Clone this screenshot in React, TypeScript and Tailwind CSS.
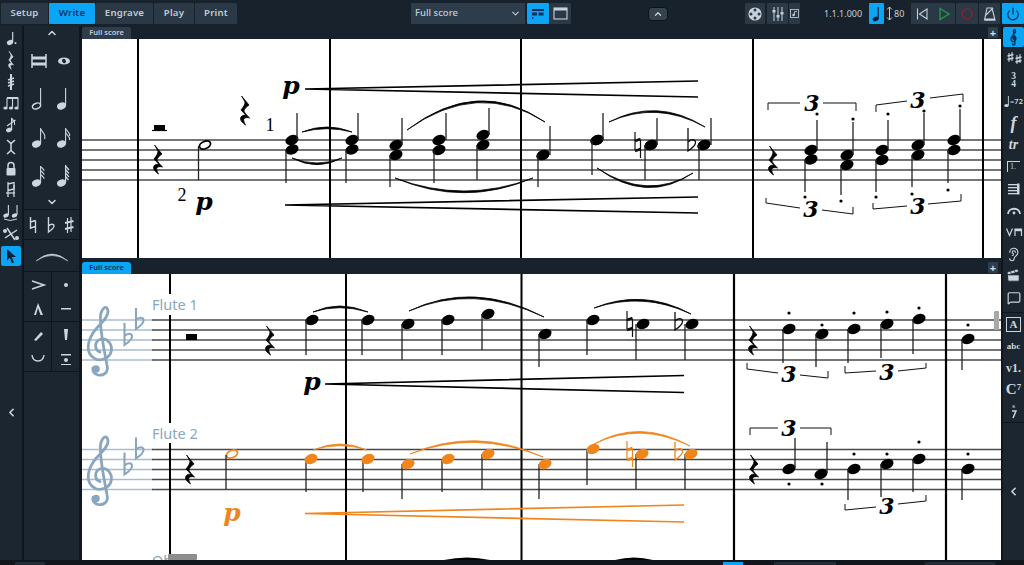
import React from "react";
import { ChevronUp, ChevronDown, ChevronLeft, Power, Ear, Clapperboard, MessageSquare } from "lucide-react";

const ORANGE = "#f0851c";
const BLUE = "#8aa6bf";
const STAFF = "#484848";
const REST = "M-3 -14 L3.5 -5 C1 -3 -0.5 -1 -1 1 C0 3 2 6 4 8 C1 7 -2 8 -1 11 C-0.5 13 0 14 0.5 15 C-2 13 -5 10 -3.5 7 C-2.5 5 0 5 1 5.5 L-3.5 0 C-1.5 -3 0 -5 0 -8 C-1 -10 -2 -12 -3 -14 Z";
const engr = "font-['DejaVu_Serif',serif] font-bold italic";

type XY = [number, number];
const Head = ({ x, y, c = "#000" }: { x: number; y: number; c?: string }) => (
  <ellipse cx={x} cy={y} rx={6.8} ry={4.9} fill={c} transform={`rotate(-24 ${x} ${y})`} />
);
const Open = ({ x, y, c }: { x: number; y: number; c: string }) => (
  <ellipse cx={x} cy={y} rx={5.8} ry={3.6} fill="none" stroke={c} strokeWidth={1.8} transform={`rotate(-24 ${x} ${y})`} />
);
const Stem = ({ x, a, b }: { x: number; a: number; b: number }) => <line x1={x} x2={x} y1={a} y2={b} stroke="#222" strokeWidth={1.3} />;
const Dot = ({ x, y }: { x: number; y: number }) => <circle cx={x} cy={y} r={1.6} fill="#000" />;
const Rest = ({ x, y }: { x: number; y: number }) => <path d={REST} fill="#000" stroke="#000" strokeWidth={0.7} transform={`translate(${x} ${y}) scale(1.15 1)`} />;
const Slur = ({ p, c = "#000", t = 3.4 }: { p: number[]; c?: string; t?: number }) => (
  <path d={`M${p[0]} ${p[1]} Q${p[2]} ${p[3]} ${p[4]} ${p[5]} Q${p[2]} ${p[3] + t} ${p[0]} ${p[1]} Z`} fill={c} stroke={c} strokeWidth={0.8} />
);
const Hairpin = ({ x1, y, x2, d, c = "#000" }: { x1: number; y: number; x2: number; d: number; c?: string }) => (
  <polyline points={`${x2},${y - d} ${x1},${y} ${x2},${y + d}`} fill="none" stroke={c} strokeWidth={1.7} />
);
const Dyn = ({ x, y, c = "#000" }: { x: number; y: number; c?: string }) => (
  <text x={x} y={y} fontSize={25} fill={c} textAnchor="middle" className={engr}>p</text>
);
const Tuplet = ({ a, b, n }: { a: XY[]; b: XY[]; n: XY }) => (
  <g>
    <polyline points={a.map((q) => q.join(",")).join(" ")} fill="none" stroke="#111" strokeWidth={1} />
    <polyline points={b.map((q) => q.join(",")).join(" ")} fill="none" stroke="#111" strokeWidth={1} />
    <text x={n[0]} y={n[1] + 8} fontSize={22} textAnchor="middle" className={engr}>3</text>
  </g>
);
const Flat = ({ x, a, b, c = "#111", w = 1.3 }: { x: number; a: number; b: number; c?: string; w?: number }) => (
  <path d={`M${x} ${a} L${x} ${b} C${x + 3} ${b - 2} ${x + 8} ${b - 6} ${x + 7.5} ${b - 9} C${x + 7} ${b - 12} ${x + 3} ${b - 12} ${x} ${b - 9}`} fill="none" stroke={c} strokeWidth={w} />
);
const Natural = ({ x, y, c = "#111" }: { x: number; y: number; c?: string }) => (
  <g stroke={c} fill="none">
    <path d={`M${x - 3} ${y - 13} V${y + 5} M${x + 2.5} ${y - 5} V${y + 13}`} strokeWidth={1.2} />
    <path d={`M${x - 3} ${y - 4} L${x + 2.5} ${y - 6} M${x - 3} ${y + 6} L${x + 2.5} ${y + 4}`} strokeWidth={2.4} />
  </g>
);
const Clef = ({ dy }: { dy: number }) => (
  <g transform={`translate(0 ${dy})`} stroke={BLUE} fill="none" strokeLinecap="round">
    <path strokeWidth={2.8} d="M100 352 C94 350 94 341 101 339 C108 338 113 345 111 352 C109 359 99 362 94 358 C87 354 86 344 93 333 C98 325 109 318 108 311 C107 305 103 307 101 313 C99 320 103 345 107 365 C109 373 103 376 98 375 C94 374 92 371 93 368" />
    <circle cx={96} cy={369} r={3.8} fill={BLUE} stroke="none" />
  </g>
);
const Staff = ({ ys, from = 82, to = 1001 }: { ys: number[]; from?: number; to?: number }) => (
  <g>{ys.map((y) => <line key={y} x1={from} x2={to} y1={y} y2={y} stroke={STAFF} strokeWidth={1.4} />)}</g>
);
const Bar = ({ x, a, b, w = 2 }: { x: number; a: number; b: number; w?: number }) => <line x1={x} x2={x} y1={a} y2={b} stroke="#000" strokeWidth={w} />;

const Chord = ({ x, y1, y2, ux, top, lx, bot }: { x: number; y1: number; y2: number; ux: number; top: number; lx: number; bot: number }) => (
  <g>
    <Head x={x} y={y1} /><Head x={x} y={y2} />
    <Stem x={ux} a={top} b={y1} /><Stem x={lx} a={y2} b={bot} />
  </g>
);

function TopScore() {
  const chords = [
    [292, 140, 149.5, 297, 113, 286, 183], [352, 140, 149.5, 358, 113, 346, 183], [396, 145, 155, 402, 118, 390, 187],
    [439, 140, 150, 446, 113, 434, 183], [483, 135, 145, 489, 108, 477, 180], [597, 140, 140, 603, 113, 592, 175],
    [543, 155, 155, 550, 126, 538, 187], [651, 145, 145, 657, 118, 645, 180], [704, 145, 145, 711, 118, 699, 180],
    [811, 150, 159.5, 817, 120, 805, 192], [847, 155, 165, 853, 122, 841, 195], [882, 150, 160, 888, 120, 876, 192],
    [918, 145, 155, 924, 113, 912, 187], [954, 140, 150, 960, 109, 948, 183],
  ];
  const dots: XY[] = [[817, 114], [805, 197], [853, 119], [841, 201], [888, 114], [876, 197], [924, 111], [912, 194], [960, 106], [948, 190]];
  return (
    <svg width={919} height={219} viewBox="82 39 919 219" className="block">
      <Staff ys={[140, 150, 160, 170, 180]} />
      {[138, 330, 521, 753, 983].map((x) => <Bar key={x} x={x} a={39} b={258} />)}
      <rect x={154} y={125} width={11} height={5} fill="#000" />
      <line x1={152} x2={167} y1={130.5} y2={130.5} stroke="#000" strokeWidth={1.2} />
      <Rest x={158} y={159} /><Rest x={245} y={110} /><Rest x={773} y={160} />
      <Open x={205} y={145} c="#000" /><Stem x={198.5} a={146} b={180} />
      <text x={270} y={131} fontSize={18} textAnchor="middle" fill="#000" fontFamily="Liberation Serif, serif">1</text>
      <text x={182} y={201} fontSize={18} textAnchor="middle" fill="#000" fontFamily="Liberation Serif, serif">2</text>
      <Dyn x={291} y={94} /><Dyn x={204} y={210} />
      {chords.map((c) => <Chord key={c[0]} x={c[0]} y1={c[1]} y2={c[2]} ux={c[3]} top={c[4]} lx={c[5]} bot={c[6]} />)}
      <Natural x={638} y={145} /><Flat x={688} a={128} b={151} />
      {dots.map((d) => <Dot key={d.join()} x={d[0]} y={d[1]} />)}
      <Hairpin x1={305} y={89} x2={698} d={8} /><Hairpin x1={285} y={205} x2={698} d={8} />
      <Slur p={[302, 132, 327, 122, 352, 132]} /><Slur p={[292, 158, 317, 168, 342, 158]} />
      <Slur p={[407, 130, 478, 76, 545, 122]} /><Slur p={[395, 178, 464, 204, 533, 178]} />
      <Slur p={[609, 122, 657, 97, 705, 127]} /><Slur p={[597, 168, 647, 201, 693, 173]} />
      <Tuplet a={[[768, 110], [768, 103], [800, 103]]} b={[[823, 103], [856, 103], [856, 111]]} n={[812, 103]} />
      <Tuplet a={[[876, 112], [876, 105], [907, 101]]} b={[[930, 98], [963, 94], [963, 102]]} n={[918, 100]} />
      <Tuplet a={[[766, 198], [766, 203], [800, 208]]} b={[[822, 210], [853, 214], [853, 207]]} n={[811, 209]} />
      <Tuplet a={[[873, 203], [873, 209], [907, 206]]} b={[[928, 204], [961, 201], [961, 194]]} n={[918, 206]} />
    </svg>
  );
}

function BottomScore() {
  const f1: number[][] = [[312, 320, 306, 355], [368, 320, 362, 355], [408, 324, 402, 360], [448, 320, 442, 355], [488, 314, 482, 350], [545, 334, 539, 367], [593, 320, 587, 355], [643, 324, 636, 360], [692, 324, 685, 360], [789, 329, 783, 363], [822, 334, 816, 367], [854, 329, 848, 363], [887, 324, 881, 358], [919, 319, 913, 354], [968, 339, 962, 370]];
  const f2: number[][] = [[311, 459, 306, 492], [368, 459, 363, 492], [408, 464, 402, 499], [448, 459, 442, 492], [488, 454, 482, 489], [545, 464, 539, 499], [593, 449, 587, 485], [642, 454, 636, 489], [691, 454, 685, 489]];
  const f2b: number[][] = [[854, 469, 848, 500], [887, 464, 881, 497], [919, 459, 913, 492], [968, 469, 962, 500]];
  const dots: XY[] = [[789, 313], [822, 325], [854, 313], [887, 312], [919, 308], [968, 325], [789, 484], [822, 484], [854, 454], [887, 454], [919, 442], [968, 454]];
  return (
    <svg width={919} height={286} viewBox="82 274 919 286" className="block">
      {[320, 330, 340, 350, 360, 449.5, 459.5, 469.5, 479.5, 489.5].map((y) => (
        <g key={y}>
          <line x1={82} x2={153} y1={y} y2={y} stroke="#a9bccc" strokeWidth={1.4} />
          <line x1={152} x2={1001} y1={y} y2={y} stroke={STAFF} strokeWidth={1.4} />
        </g>
      ))}
      <Clef dy={0} /><Clef dy={129.5} />
      <Flat x={136} a={308} b={329} c={BLUE} w={2.1} /><Flat x={124.5} a={323} b={345} c={BLUE} w={2.1} />
      <Flat x={136} a={437.5} b={458.5} c={BLUE} w={2.1} /><Flat x={124.5} a={452.5} b={474.5} c={BLUE} w={2.1} />
      <text x={152} y={310} fontSize={14.5} fill={BLUE} fontFamily="Noto Sans, sans-serif">Flute 1</text>
      <text x={152} y={439} fontSize={14.5} fill={BLUE} fontFamily="Noto Sans, sans-serif">Flute 2</text>
      <Bar x={170} a={274} b={294} /><Bar x={170} a={315} b={423} /><Bar x={170} a={443} b={556} />
      {[346, 521.5, 734, 946].map((x) => <Bar key={x} x={x} a={274} b={560} w={x > 700 ? 2.2 : 2} />)}
      <rect x={186} y={334} width={11} height={6} fill="#000" />
      <Rest x={270} y={340} /><Rest x={753} y={340} /><Rest x={190} y={469} /><Rest x={754} y={469} />
      {f1.map((n) => <g key={n[0]}><Head x={n[0]} y={n[1]} /><Stem x={n[2]} a={n[1]} b={n[3]} /></g>)}
      {f2.map((n) => <g key={n[0]}><Stem x={n[2]} a={n[1]} b={n[3]} /><Head x={n[0]} y={n[1]} c={ORANGE} /></g>)}
      {f2b.map((n) => <g key={n[0]}><Head x={n[0]} y={n[1]} /><Stem x={n[2]} a={n[1]} b={n[3]} /></g>)}
      <Head x={789} y={469} /><Stem x={795} a={438} b={468} /><Head x={821} y={474} /><Stem x={827} a={442} b={473} />
      <Open x={232} y={454} c={ORANGE} /><Stem x={226} a={455} b={489} />
      <Natural x={630} y={324} /><Flat x={675} a={312} b={330} />
      <Natural x={630} y={454} c={ORANGE} /><Flat x={675} a={442} b={460} c={ORANGE} />
      {dots.map((d) => <Dot key={d.join()} x={d[0]} y={d[1]} />)}
      <Slur p={[313, 312, 339, 300, 368, 312]} /><Slur p={[409, 311, 473, 280, 544, 317]} /><Slur p={[594, 308, 643, 288, 691, 314]} />
      <Slur p={[313, 450, 340, 438, 367, 450]} c={ORANGE} /><Slur p={[410, 454, 475, 426, 543, 457]} c={ORANGE} /><Slur p={[594, 444, 640, 418, 690, 446]} c={ORANGE} />
      <Dyn x={312} y={390} /><Dyn x={232} y={521} c={ORANGE} />
      <Hairpin x1={325} y={384} x2={684} d={8.5} /><Hairpin x1={305} y={513.5} x2={684} d={8.5} c={ORANGE} />
      <Tuplet a={[[747, 363], [747, 369], [778, 373]]} b={[[800, 375], [828, 378], [828, 371]]} n={[789, 374]} />
      <Tuplet a={[[845, 366], [845, 373], [876, 371]]} b={[[898, 371], [926, 368], [926, 363]]} n={[887, 372]} />
      <Tuplet a={[[750, 435], [750, 428], [778, 428]]} b={[[800, 428], [831, 428], [831, 435]]} n={[789, 428]} />
      <Tuplet a={[[845, 504], [845, 510], [876, 507]]} b={[[898, 504], [926, 501], [926, 495]]} n={[887, 506]} />
      <rect x={994} y={311} width={5} height={19} rx={1} fill="#a8a8a8" />
      <text x={152} y={566} fontSize={14.5} fill={BLUE} fontFamily="Noto Sans, sans-serif">Ob</text>
      <rect x={168} y={554} width={29} height={6} rx={1} fill="#8e8e8e" />
      <path d="M444 560 Q467 555 490 560 Z M615 560 Q634 555 653 560 Z" fill="#000" />
    </svg>
  );
}

const Ic = ({ w = 22, h = 22, children, vb }: { w?: number; h?: number; vb?: string; children: React.ReactNode }) => (
  <svg width={w} height={h} viewBox={vb ?? `0 0 ${w} ${h}`} fill="currentColor" stroke="none">{children}</svg>
);
const H = ({ x, y, o }: { x: number; y: number; o?: boolean }) => (
  <ellipse cx={x} cy={y} rx={o ? 4.2 : 4.6} ry={o ? 2.7 : 3.4} transform={`rotate(-22 ${x} ${y})`} fill={o ? "none" : "currentColor"} stroke={o ? "currentColor" : "none"} strokeWidth={1.4} />
);
const L = ({ d, w = 1.1 }: { d: string; w?: number }) => <path d={d} fill="none" stroke="currentColor" strokeWidth={w} />;

const leftIcons: React.ReactNode[] = [
  <Ic key="a"><ellipse cx={10} cy={15.5} rx={3.2} ry={2.4} transform="rotate(-22 10 15.5)" /><L d="M12.7 15V5" w={1.2} /><circle cx={15.5} cy={16} r={1} /></Ic>,
  <Ic key="b"><path d={REST} stroke="currentColor" strokeWidth={1} transform="translate(11 11) scale(.62)" /></Ic>,
  <Ic key="c"><L d="M11 3V19" w={2} /><L d="M8 9L14 7M8 12L14 10M8 15L14 13" w={1.6} /></Ic>,
  <Ic key="d"><L d="M7 6H18V15M12.5 6V15M7 6V15" w={1.1} /><L d="M7 6H18" w={2} /><ellipse cx={5.5} cy={16} rx={2.2} ry={1.6} /><ellipse cx={11} cy={16} rx={2.2} ry={1.6} /><ellipse cx={16.5} cy={16} rx={2.2} ry={1.6} /></Ic>,
  <Ic key="e"><ellipse cx={9} cy={16} rx={3} ry={2.2} transform="rotate(-22 9 16)" /><L d="M11.6 16V4C12.5 7 16 7 14.5 11" w={1.2} /><L d="M7 12L15.5 6" w={1.2} /></Ic>,
  <Ic key="f"><L d="M7 4C9 6 10 6 11 8C12 6 13 6 15 4M11 8V14M7 18C9 16 10 16 11 14C12 16 13 16 15 18" w={1.5} /></Ic>,
  <Ic key="g"><L d="M8 10V7.5C8 3.5 14 3.5 14 7.5V10" w={1.5} /><rect x={6.5} y={10} width={9} height={7.5} rx={1} /></Ic>,
  <Ic key="h"><L d="M8 3V18M8 5L14 3.5V10L8 11.5" w={1.3} /><L d="M14 6V18" w={1.3} /><L d="M6 14H15" w={1.3} /></Ic>,
  <Ic key="i"><ellipse cx={6} cy={14.5} rx={2.8} ry={2} transform="rotate(-22 6 14.5)" /><ellipse cx={14.5} cy={14.5} rx={2.8} ry={2} transform="rotate(-22 14.5 14.5)" /><L d="M8.4 14V4M17 14V4" w={1.1} /><L d="M4 18Q10 21 17 18" w={1} /></Ic>,
  <Ic key="j"><L d="M5 15L17 7M7 5L15 17" w={1.5} /><circle cx={5} cy={8} r={2} /><circle cx={17} cy={15} r={2} /></Ic>,
];

const Arts: React.ReactNode[] = [
  <Ic key="1" w={26} h={24}><L d="M7 8L19 12L7 16" w={1.6} /></Ic>,
  <Ic key="2" w={26} h={24}><circle cx={13} cy={12} r={2} /></Ic>,
  <Ic key="3" w={26} h={24}><path d="M13 6L18 18H15.5L13 11L11 18H9Z" /></Ic>,
  <Ic key="4" w={26} h={24}><rect x={8} y={11} width={10} height={1.5} /></Ic>,
  <Ic key="5" w={26} h={24}><path d="M9 17L16 9L18 11L11 18Z" /></Ic>,
  <Ic key="6" w={26} h={24}><path d="M11 6H15L14 17H12Z" /></Ic>,
  <Ic key="7" w={26} h={24}><L d="M7 8C8 16 18 16 19 8" w={1.4} /></Ic>,
  <Ic key="8" w={26} h={24}><rect x={8} y={7} width={10} height={1.5} /><circle cx={13} cy={13} r={2} /><rect x={8} y={17} width={10} height={1} /></Ic>,
];

const Cell = ({ children }: { children: React.ReactNode }) => <div className="flex h-[38px] items-center justify-center">{children}</div>;

function LeftPanels() {
  return (
    <>
      <div className="flex h-full w-[22px] flex-col bg-[#1c2630] pt-[1px] text-[#cdd6de]">
        {leftIcons.map((ic, i) => <div key={i} className="flex h-[21.8px] items-center justify-center">{ic}</div>)}
        <div className="mx-[1px] mt-[1px] flex h-[20px] items-center justify-center rounded-[2px] bg-[#0ba5f5] text-[#06203a]">
          <Ic w={16} h={18}><path d="M4 2L13 10H8.8L11 15.5L9 16.3L6.8 10.8L4 13.5Z" /></Ic>
        </div>
        <div className="flex flex-1 items-center justify-center"><ChevronLeft size={13} strokeWidth={3} /></div>
      </div>
      <div className="ml-[2px] flex h-full w-[55px] flex-col gap-[1px] text-[#cdd6de]">
        <div className="flex h-[183px] flex-col bg-[#1c2630]">
          <div className="flex h-[14px] items-center justify-center"><ChevronUp size={12} strokeWidth={3} /></div>
          <div className="mt-[2px] grid grid-cols-[25px_25px] pl-[2px]">
            <Cell><Ic w={24} h={24}><L d="M5 5V19M19 5V19" w={1.5} /><rect x={5} y={7.5} width={14} height={3} /><rect x={5} y={13.5} width={14} height={3} /></Ic></Cell>
            <Cell><Ic w={24} h={24}><ellipse cx={12} cy={12} rx={6} ry={3.6} /><ellipse cx={12} cy={12} rx={1.8} ry={2.4} fill="#1c2630" transform="rotate(-30 12 12)" /></Ic></Cell>
            <Cell><Ic w={24} h={28}><H x={9.5} y={21} o /><L d="M13.6 20.5V3" /></Ic></Cell>
            <Cell><Ic w={24} h={28}><H x={9.5} y={21} /><L d="M13.6 20.5V3" /></Ic></Cell>
            <Cell><Ic w={24} h={28}><H x={9.5} y={21} /><L d="M13.6 20.5V5C14 9 19.5 10 17.5 16" /></Ic></Cell>
            <Cell><Ic w={24} h={28}><H x={9.5} y={21} /><L d="M13.6 20.5V5C14 8 18.5 9 17.5 13M13.6 9C14 12 18.5 13 17.5 17" /></Ic></Cell>
            <Cell><Ic w={24} h={28}><H x={9.5} y={22} /><L d="M13.6 21.5V5C14 7 17.5 8 17 10M13.6 9C14 11 17.5 12 17 14M13.6 13C14 15 17.5 16 17 18" /></Ic></Cell>
            <Cell><Ic w={24} h={28}><H x={9.5} y={22} /><L d="M13.6 21.5V4M13.6 5L17 9M13.6 8.5L17 12.5M13.6 12L17 16M13.6 15.5L16.5 19" w={1.2} /></Ic></Cell>
          </div>
          <div className="mt-auto flex h-[15px] items-center justify-center"><ChevronDown size={12} strokeWidth={3} /></div>
        </div>
        <div className="flex h-[29px] bg-[#1c2630]">
          <div className="flex w-[18px] items-center justify-center"><Ic w={14} h={20}><L d="M4.5 2V14M4.5 7L9.5 5.5M4.5 13L9.5 11.5M9.5 5.5V18" w={1.4} /></Ic></div>
          <div className="flex w-[18px] items-center justify-center"><Ic w={14} h={20}><L d="M4.5 2V17C7 15 10.5 13 10 10.5C9.5 8.5 6 9 4.5 11" w={1.4} /></Ic></div>
          <div className="flex w-[18px] items-center justify-center"><Ic w={14} h={20}><L d="M5.5 3V18M9 2V17" w={1.2} /><L d="M3 8L11.5 6M3 14L11.5 12" w={1.9} /></Ic></div>
        </div>
        <div className="flex h-[31px] items-center justify-center bg-[#1c2630]">
          <Ic w={36} h={14}><path d="M2 12Q18 -2 34 12Q18 1 2 12Z" stroke="currentColor" strokeWidth={0.5} /></Ic>
        </div>
        <div className="grid h-[99px] grid-cols-[27px_27px] gap-[1px]">
          {[[0, 2], [1, 3], [4, 6], [5, 7]].map((p) => (
            <div key={p[0]} className="flex flex-col items-center justify-center bg-[#1c2630]">
              {Arts[p[0]]}
              {Arts[p[1]]}
            </div>
          ))}
        </div>
        <div className="flex-1 bg-[#1c2630]" />
      </div>
    </>
  );
}

function TabBar({ active }: { active?: boolean }) {
  return (
    <div className={`flex items-end bg-[#18222c] ${active ? "h-[16px]" : "h-[13px]"}`}>
      <div className={`flex h-[12px] w-[49px] items-center justify-center rounded-t-[3px] text-[7.5px] font-semibold ${active ? "bg-[#0ba5f5] text-[#06305a]" : "bg-[#2f3d4b] text-[#c3ccd4]"}`}>Full score</div>
      <div className="mr-[3px] mb-[1px] ml-auto flex h-[11px] w-[10px] items-center justify-center rounded-[1px] bg-[#2f3d4b] text-[11px] leading-none font-bold text-[#d5dce2]">+</div>
    </div>
  );
}

const Btn = ({ w, on, children, cls = "" }: { w: number; on?: boolean; children?: React.ReactNode; cls?: string }) => (
  <div style={{ width: w }} className={`flex h-[21px] items-center justify-center rounded-[1px] ${on ? "bg-[#0ba5f5]" : "bg-[#2b3946]"} ${cls}`}>{children}</div>
);
const Mode = ({ w, on, label }: { w: number; on?: boolean; label: string }) => (
  <Btn w={w} on={on}><span className={`text-[9.6px] font-semibold tracking-[0.2px] ${on ? "text-[#07346b]" : "text-[#c3ccd4]"}`}>{label}</span></Btn>
);

function TopBar() {
  return (
    <div className="flex h-[26px] items-start bg-[#18222c] pt-[3px] text-[#c8d1d9]">
      <div className="ml-[1px] flex gap-[1px]">
        <Mode w={47} label="Setup" /><Mode w={46} on label="Write" /><Mode w={57} label="Engrave" /><Mode w={40} label="Play" /><Mode w={42} label="Print" />
      </div>
      <div className="ml-[174px] flex h-[21px] w-[114px] items-center justify-between bg-[#2e3d4b] pr-[4px] pl-[4px] text-[9.5px] font-medium text-[#c3ccd4]">
        <span>Full score</span><ChevronDown size={11} strokeWidth={2.5} />
      </div>
      <Btn w={22} on cls="ml-[2px] text-[#06305a]"><Ic w={14} h={12}><rect x={1} y={1} width={12} height={2} /><rect x={1} y={4.5} width={5} height={3} /><rect x={7.5} y={4.5} width={5} height={3} /><rect x={1} y={9} width={1.4} height={2} /></Ic></Btn>
      <Btn w={21} cls="ml-[1px]"><Ic w={15} h={13}><rect x={1} y={1} width={13} height={11} fill="none" stroke="currentColor" strokeWidth={1.1} /><rect x={1} y={1} width={13} height={2.5} /></Ic></Btn>
      <div className="mt-[4px] ml-[77px] flex h-[14px] w-[20px] items-center justify-center rounded-[4px] border border-[#0e1318] bg-[#34434f]"><ChevronUp size={10} strokeWidth={3} /></div>
      <Btn w={20} cls="ml-[77px]"><Ic w={16} h={16}><circle cx={8} cy={8} r={6.6} /><g fill="#2b3946"><circle cx={8} cy={4} r={1.5} /><circle cx={8} cy={12} r={1.5} /><circle cx={4} cy={8} r={1.5} /><circle cx={12} cy={8} r={1.5} /></g></Ic></Btn>
      <Btn w={21} cls="ml-[2px]"><Ic w={14} h={16}><L d="M3 1V15M7 1V15M11 1V15" w={1} /><rect x={1.5} y={4} width={3} height={2.5} /><rect x={5.5} y={9} width={3} height={2.5} /><rect x={9.5} y={6} width={3} height={2.5} /></Ic></Btn>
      <Btn w={11} cls="ml-[1px]"><Ic w={9} h={9}><rect x={0.5} y={0.5} width={8} height={8} fill="none" stroke="currentColor" strokeWidth={0.8} /><circle cx={3.5} cy={6} r={1.2} /><L d="M4.5 6V2.5H7" w={0.8} /></Ic></Btn>
      <span className="mt-[4px] ml-[24px] w-[36px] text-center text-[9px] leading-[13px] whitespace-nowrap">1.1.1.000</span>
      <Btn w={15} on cls="ml-[9px] text-[#06203a]"><Ic w={11} h={18}><ellipse cx={4.5} cy={14} rx={3} ry={2.2} transform="rotate(-22 4.5 14)" /><L d="M7.2 14V2" w={1.2} /></Ic></Btn>
      <div className="ml-[1px] flex h-[21px] w-[23px] items-center text-[9px]">
        <Ic w={9} h={17}><L d="M4.5 2V15M2 4.5L4.5 2L7 4.5M2 12.5L4.5 15L7 12.5" w={1} /></Ic><span>80</span>
      </div>
      <Btn w={22} cls="ml-[3px]"><Ic w={14} h={14}><L d="M2.5 1.5V12.5M12 2L4.5 7L12 12Z" w={1.1} /></Ic></Btn>
      <Btn w={22} cls="ml-[0px]"><Ic w={14} h={14}><path d="M3 1.5L12 7L3 12.5Z" fill="none" stroke="#1f9a45" strokeWidth={1.4} /></Ic></Btn>
      <Btn w={22} cls="ml-[1px]"><Ic w={14} h={14}><circle cx={7} cy={7} r={5} fill="none" stroke="#7d2530" strokeWidth={1.6} /></Ic></Btn>
      <Btn w={21} cls="ml-[1px]"><Ic w={16} h={16}><L d="M5 2H10L13 14H2.5ZM4 9L11 2" w={1.1} /><rect x={3} y={12.5} width={10} height={2} /></Ic></Btn>
      <Btn w={22} on cls="ml-[2px] text-[#06305a]"><Power size={14} strokeWidth={2} /></Btn>
    </div>
  );
}

const R = ({ children }: { children: React.ReactNode }) => <div className="flex h-[21.8px] items-center justify-center">{children}</div>;
const serif = "font-['Liberation_Serif',serif]";

function RightPanel() {
  return (
    <div className="ml-[2px] flex h-full w-[21px] flex-col gap-[1px] text-[#cdd6de]">
      <div className="flex h-[286px] flex-col bg-[#1c2630] pt-[1px]">
        <div className="flex h-[20px] items-center justify-center rounded-[2px] bg-[#0ba5f5] text-[#06305a]">
          <Ic w={12} h={20}><L d="M6 12C4.5 12 4.5 9 6 9C8 9 8.5 12 7 14C5 15.5 3 14 3 12C3 9 7 7 7.5 4.5C7.5 2 6 2 5.5 4C5.5 7 6.5 13 7 16C7 18.5 4.5 18.5 4.5 16.5" w={1.4} /></Ic>
        </div>
        <R><Ic w={18} h={18}><L d="M4 4V13M7 3V12M12 6V15M15 5V14" w={1} /><L d="M2.5 7L8.5 5.5M2.5 10.5L8.5 9M10.5 9.5L16.5 8M10.5 13L16.5 11.5" w={1.5} /></Ic></R>
        <R><span className={`${serif} flex flex-col text-center text-[9.5px] leading-[8px] font-bold`}><span>3</span><span>4</span></span></R>
        <R><span className="flex items-center text-[7.5px] font-semibold"><Ic w={6} h={13}><ellipse cx={2.5} cy={10.5} rx={2.2} ry={1.6} /><L d="M4.4 10V1" w={0.9} /></Ic>=72</span></R>
        <R><span className={`${serif} text-[18px] leading-none font-bold italic`}>f</span></R>
        <R><span className={`${serif} text-[14px] leading-none font-bold italic`}>tr</span></R>
        <R><span className={`${serif} h-[11px] w-[13px] border-t border-l border-[#cdd6de] pl-[2px] text-[8px] leading-[10px]`}>1.</span></R>
        <R><Ic w={14} h={14}><g><rect x={1} y={2} width={9} height={1.3} /><rect x={1} y={5} width={9} height={1.3} /><rect x={1} y={8} width={9} height={1.3} /><rect x={1} y={11} width={9} height={1.3} /><rect x={10} y={1.5} width={2.5} height={11} /></g></Ic></R>
        <R><Ic w={16} h={12}><L d="M2 10C2.5 3 13.5 3 14 10" w={1.8} /><circle cx={8} cy={9} r={1.4} /></Ic></R>
        <R><Ic w={18} h={10}><L d="M1.5 1.5L4.5 8.5L7.5 1.5" w={1.2} /><L d="M10 9V2H16.5V9" w={1.2} /><rect x={10} y={2} width={6.5} height={2.2} /></Ic></R>
        <R><Ear size={15} strokeWidth={1.8} /></R>
        <R><Clapperboard size={15} fill="#cdd6de" stroke="#1c2630" strokeWidth={1.2} /></R>
        <R><MessageSquare size={14} strokeWidth={2} /></R>
      </div>
      <div className="flex h-[109px] flex-col bg-[#1c2630] pt-[1px]">
        <R><span className={`${serif} flex h-[15px] w-[15px] items-center justify-center border border-[#cdd6de] text-[11px] leading-none font-bold`}>A</span></R>
        <R><span className={`${serif} text-[9px] leading-none font-bold`}>abc</span></R>
        <R><span className={`${serif} text-[12px] leading-none font-bold`}>v1.</span></R>
        <R><span className={`${serif} text-[15px] leading-none font-bold`}>C<sup className="text-[9px]">7</sup></span></R>
        <R><span className={`${serif} flex flex-col items-center text-[7px] leading-[7px] font-bold`}>s<Ic w={6} h={9}><L d="M1 1H5L2 8" w={1.5} /></Ic></span></R>
      </div>
      <div className="flex flex-1 items-center justify-center bg-[#1c2630]"><ChevronLeft size={13} strokeWidth={3} /></div>
    </div>
  );
}

const stripCls = "h-[3px] bg-[#222d38]";

export default function App() {
  return (
    <div className="flex h-[565px] w-[1024px] flex-col overflow-hidden bg-[#10161c] font-['Noto_Sans',sans-serif]">
      <TopBar />
      <div className="flex h-[534px]">
        <LeftPanels />
        <div className="ml-[3px] flex w-[919px] flex-col">
          <TabBar />
          <div className="h-[219px] bg-white"><TopScore /></div>
          <TabBar active />
          <div className="h-[286px] bg-white"><BottomScore /></div>
        </div>
        <RightPanel />
      </div>
      <div className="flex flex-1 items-end gap-[1px]">
        <div className={`ml-[15px] w-[30px] ${stripCls}`} />
        <div className="ml-[677px] h-[3px] w-[20px] bg-[#0ba5f5]" />
        <div className={`ml-[30px] w-[62px] ${stripCls}`} />
        <div className={`ml-[88px] w-[70px] ${stripCls}`} />
      </div>
    </div>
  );
}
